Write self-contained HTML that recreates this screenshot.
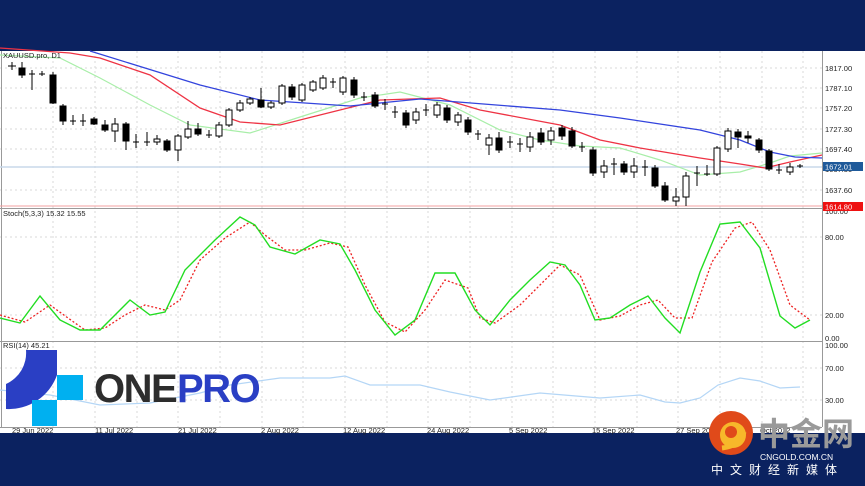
<!DOCTYPE html>
<html><head><meta charset="utf-8"><style>
html,body{margin:0;padding:0;width:865px;height:486px;overflow:hidden;background:#0b2260;font-family:"Liberation Sans",sans-serif}
svg{position:absolute;left:0;top:0}
</style></head><body>
<svg width="865" height="486" viewBox="0 0 865 486" xmlns="http://www.w3.org/2000/svg" font-family="Liberation Sans, sans-serif">
<rect x="0" y="0" width="865" height="51" fill="#0b2260"/>
<rect x="0" y="51" width="865" height="382" fill="#fff"/>
<rect x="0" y="433" width="865" height="53" fill="#0b2260"/>
<g stroke="#d8d8d8" stroke-dasharray="2,3" stroke-width="1">
<line x1="53" y1="51" x2="53" y2="427"/><line x1="95" y1="51" x2="95" y2="427"/><line x1="137" y1="51" x2="137" y2="427"/><line x1="178" y1="51" x2="178" y2="427"/><line x1="220" y1="51" x2="220" y2="427"/><line x1="262" y1="51" x2="262" y2="427"/><line x1="303" y1="51" x2="303" y2="427"/><line x1="345" y1="51" x2="345" y2="427"/><line x1="387" y1="51" x2="387" y2="427"/><line x1="428" y1="51" x2="428" y2="427"/><line x1="470" y1="51" x2="470" y2="427"/><line x1="512" y1="51" x2="512" y2="427"/><line x1="553" y1="51" x2="553" y2="427"/><line x1="595" y1="51" x2="595" y2="427"/><line x1="637" y1="51" x2="637" y2="427"/><line x1="678" y1="51" x2="678" y2="427"/><line x1="720" y1="51" x2="720" y2="427"/><line x1="762" y1="51" x2="762" y2="427"/><line x1="803" y1="51" x2="803" y2="427"/>
<line x1="0" y1="68" x2="822" y2="68"/><line x1="0" y1="88" x2="822" y2="88"/><line x1="0" y1="108" x2="822" y2="108"/><line x1="0" y1="129" x2="822" y2="129"/><line x1="0" y1="149" x2="822" y2="149"/><line x1="0" y1="190" x2="822" y2="190"/>
<line x1="0" y1="237" x2="822" y2="237"/><line x1="0" y1="315" x2="822" y2="315"/>
<line x1="0" y1="368" x2="822" y2="368"/><line x1="0" y1="400" x2="822" y2="400"/>
</g>
<g stroke="#999" fill="none" stroke-width="1">
<line x1="822.5" y1="51" x2="822.5" y2="427"/>
<line x1="0" y1="208.5" x2="822" y2="208.5"/>
<line x1="0" y1="341.5" x2="822" y2="341.5"/>
<line x1="0" y1="427.5" x2="822" y2="427.5"/>
<line x1="1.5" y1="51" x2="1.5" y2="427"/>
</g>
<line x1="0" y1="167" x2="822" y2="167" stroke="#c8d8ea" stroke-width="1.5"/>
<line x1="0" y1="206" x2="822" y2="206" stroke="#f3a0a0" stroke-width="1"/>
<polyline fill="none" stroke="#a8eea8" stroke-width="1.2" points="0,55 60,58 100,78 150,105 190,125 250,133 300,117 360,98 400,92 450,105 500,130 540,140 580,146 620,148 660,160 700,175 740,172 770,163 790,156 822,153"/>
<polyline fill="none" stroke="#ee3344" stroke-width="1.3" points="0,48 70,53 100,58 150,75 200,108 240,122 280,125 340,110 380,100 440,98 480,110 560,125 600,140 640,148 700,158 740,164 765,168 790,162 822,155"/>
<polyline fill="none" stroke="#3344dd" stroke-width="1.3" points="90,51 200,85 260,100 350,106 420,99 560,110 620,118 700,130 740,140 770,152 795,157 822,158"/>
<g stroke="#000" stroke-width="1">
<line x1="12" y1="62" x2="12" y2="70"/><line x1="8" y1="66" x2="16" y2="66"/>
<line x1="22" y1="62" x2="22" y2="78"/><rect x="19" y="68" width="6" height="7" fill="#000"/>
<line x1="32" y1="70" x2="32" y2="90"/><line x1="29" y1="74" x2="35" y2="74"/>
<line x1="42" y1="71" x2="42" y2="76"/><line x1="39" y1="74" x2="45" y2="74"/>
<line x1="53" y1="72" x2="53" y2="104"/><rect x="50" y="75" width="6" height="28" fill="#000"/>
<line x1="63" y1="104" x2="63" y2="125"/><rect x="60" y="106" width="6" height="15" fill="#000"/>
<line x1="73" y1="115" x2="73" y2="125"/><line x1="70" y1="121" x2="76" y2="121"/>
<line x1="83" y1="114" x2="83" y2="126"/><line x1="80" y1="121" x2="86" y2="121"/>
<line x1="94" y1="117" x2="94" y2="125"/><rect x="91" y="119" width="6" height="5" fill="#000"/>
<line x1="105" y1="120" x2="105" y2="132"/><rect x="102" y="125" width="6" height="5" fill="#000"/>
<line x1="115" y1="118" x2="115" y2="142"/><rect x="112" y="124" width="6" height="7" fill="#fff"/>
<line x1="126" y1="122" x2="126" y2="150"/><rect x="123" y="124" width="6" height="17" fill="#000"/>
<line x1="136" y1="134" x2="136" y2="148"/><line x1="133" y1="142" x2="139" y2="142"/>
<line x1="147" y1="132" x2="147" y2="146"/><line x1="144" y1="142" x2="150" y2="142"/>
<line x1="157" y1="135" x2="157" y2="145"/><rect x="154" y="139" width="6" height="3" fill="#fff"/>
<line x1="167" y1="139" x2="167" y2="152"/><rect x="164" y="141" width="6" height="9" fill="#000"/>
<line x1="178" y1="134" x2="178" y2="161"/><rect x="175" y="136" width="6" height="14" fill="#fff"/>
<line x1="188" y1="121" x2="188" y2="139"/><rect x="185" y="129" width="6" height="8" fill="#fff"/>
<line x1="198" y1="123" x2="198" y2="136"/><rect x="195" y="129" width="6" height="5" fill="#000"/>
<line x1="209" y1="130" x2="209" y2="138"/><line x1="206" y1="135" x2="212" y2="135"/>
<line x1="219" y1="122" x2="219" y2="138"/><rect x="216" y="125" width="6" height="11" fill="#fff"/>
<line x1="229" y1="108" x2="229" y2="127"/><rect x="226" y="110" width="6" height="15" fill="#fff"/>
<line x1="240" y1="100" x2="240" y2="112"/><rect x="237" y="103" width="6" height="7" fill="#fff"/>
<line x1="250" y1="97" x2="250" y2="105"/><rect x="247" y="99" width="6" height="4" fill="#fff"/>
<line x1="261" y1="88" x2="261" y2="108"/><rect x="258" y="100" width="6" height="7" fill="#000"/>
<line x1="271" y1="101" x2="271" y2="109"/><rect x="268" y="103" width="6" height="4" fill="#fff"/>
<line x1="282" y1="84" x2="282" y2="105"/><rect x="279" y="86" width="6" height="17" fill="#fff"/>
<line x1="292" y1="84" x2="292" y2="100"/><rect x="289" y="87" width="6" height="10" fill="#000"/>
<line x1="302" y1="83" x2="302" y2="102"/><rect x="299" y="85" width="6" height="15" fill="#fff"/>
<line x1="313" y1="80" x2="313" y2="92"/><rect x="310" y="82" width="6" height="8" fill="#fff"/>
<line x1="323" y1="75" x2="323" y2="90"/><rect x="320" y="78" width="6" height="10" fill="#fff"/>
<line x1="333" y1="78" x2="333" y2="88"/><line x1="330" y1="82" x2="336" y2="82"/>
<line x1="343" y1="76" x2="343" y2="95"/><rect x="340" y="78" width="6" height="14" fill="#fff"/>
<line x1="354" y1="77" x2="354" y2="98"/><rect x="351" y="80" width="6" height="15" fill="#000"/>
<line x1="364" y1="92" x2="364" y2="101"/><line x1="361" y1="97" x2="367" y2="97"/>
<line x1="375" y1="92" x2="375" y2="108"/><rect x="372" y="95" width="6" height="11" fill="#000"/>
<line x1="385" y1="99" x2="385" y2="110"/><line x1="382" y1="104" x2="388" y2="104"/>
<line x1="395" y1="106" x2="395" y2="118"/><line x1="392" y1="112" x2="398" y2="112"/>
<line x1="406" y1="110" x2="406" y2="128"/><rect x="403" y="113" width="6" height="12" fill="#000"/>
<line x1="416" y1="108" x2="416" y2="124"/><rect x="413" y="112" width="6" height="8" fill="#fff"/>
<line x1="426" y1="104" x2="426" y2="116"/><line x1="423" y1="110" x2="429" y2="110"/>
<line x1="437" y1="102" x2="437" y2="118"/><rect x="434" y="105" width="6" height="10" fill="#fff"/>
<line x1="447" y1="105" x2="447" y2="123"/><rect x="444" y="108" width="6" height="12" fill="#000"/>
<line x1="458" y1="112" x2="458" y2="126"/><rect x="455" y="115" width="6" height="7" fill="#fff"/>
<line x1="468" y1="117" x2="468" y2="135"/><rect x="465" y="120" width="6" height="12" fill="#000"/>
<line x1="478" y1="130" x2="478" y2="140"/><line x1="475" y1="134" x2="481" y2="134"/>
<line x1="489" y1="134" x2="489" y2="155"/><rect x="486" y="138" width="6" height="7" fill="#fff"/>
<line x1="499" y1="132" x2="499" y2="153"/><rect x="496" y="138" width="6" height="12" fill="#000"/>
<line x1="510" y1="136" x2="510" y2="148"/><line x1="507" y1="142" x2="513" y2="142"/>
<line x1="520" y1="138" x2="520" y2="152"/><line x1="517" y1="144" x2="523" y2="144"/>
<line x1="530" y1="132" x2="530" y2="152"/><rect x="527" y="137" width="6" height="10" fill="#fff"/>
<line x1="541" y1="128" x2="541" y2="145"/><rect x="538" y="133" width="6" height="9" fill="#000"/>
<line x1="551" y1="127" x2="551" y2="145"/><rect x="548" y="131" width="6" height="9" fill="#fff"/>
<line x1="562" y1="125" x2="562" y2="140"/><rect x="559" y="128" width="6" height="8" fill="#000"/>
<line x1="572" y1="127" x2="572" y2="148"/><rect x="569" y="131" width="6" height="15" fill="#000"/>
<line x1="582" y1="142" x2="582" y2="152"/><line x1="579" y1="147" x2="585" y2="147"/>
<line x1="593" y1="147" x2="593" y2="176"/><rect x="590" y="150" width="6" height="23" fill="#000"/>
<line x1="604" y1="160" x2="604" y2="178"/><rect x="601" y="166" width="6" height="6" fill="#fff"/>
<line x1="614" y1="158" x2="614" y2="175"/><line x1="611" y1="164" x2="617" y2="164"/>
<line x1="624" y1="161" x2="624" y2="175"/><rect x="621" y="164" width="6" height="8" fill="#000"/>
<line x1="634" y1="158" x2="634" y2="178"/><rect x="631" y="166" width="6" height="6" fill="#fff"/>
<line x1="645" y1="160" x2="645" y2="176"/><line x1="642" y1="167" x2="648" y2="167"/>
<line x1="655" y1="165" x2="655" y2="188"/><rect x="652" y="168" width="6" height="18" fill="#000"/>
<line x1="665" y1="182" x2="665" y2="202"/><rect x="662" y="186" width="6" height="14" fill="#000"/>
<line x1="676" y1="188" x2="676" y2="206"/><rect x="673" y="197" width="6" height="4" fill="#fff"/>
<line x1="686" y1="172" x2="686" y2="206"/><rect x="683" y="176" width="6" height="21" fill="#fff"/>
<line x1="697" y1="166" x2="697" y2="186"/><line x1="694" y1="173" x2="700" y2="173"/>
<line x1="707" y1="165" x2="707" y2="176"/><line x1="704" y1="174" x2="710" y2="174"/>
<line x1="717" y1="146" x2="717" y2="176"/><rect x="714" y="148" width="6" height="26" fill="#fff"/>
<line x1="728" y1="128" x2="728" y2="152"/><rect x="725" y="131" width="6" height="18" fill="#fff"/>
<line x1="738" y1="129" x2="738" y2="148"/><rect x="735" y="132" width="6" height="5" fill="#000"/>
<line x1="748" y1="131" x2="748" y2="143"/><rect x="745" y="136" width="6" height="2" fill="#000"/>
<line x1="759" y1="138" x2="759" y2="153"/><rect x="756" y="140" width="6" height="10" fill="#000"/>
<line x1="769" y1="149" x2="769" y2="171"/><rect x="766" y="151" width="6" height="18" fill="#000"/>
<line x1="779" y1="164" x2="779" y2="174"/><line x1="776" y1="170" x2="782" y2="170"/>
<line x1="790" y1="163" x2="790" y2="175"/><rect x="787" y="167" width="6" height="5" fill="#fff"/>
<line x1="800" y1="164" x2="800" y2="168"/><line x1="797" y1="166" x2="803" y2="166"/>
</g>
<polyline fill="none" stroke="#ee2222" stroke-width="1.3" stroke-dasharray="2,2" points="0,315 25,322 50,305 68,318 85,330 105,328 125,315 145,305 165,310 180,300 200,260 225,238 250,222 265,235 285,250 305,250 330,243 348,247 365,285 385,322 405,332 425,310 445,280 468,288 480,318 495,323 520,305 540,285 560,265 580,275 600,320 620,316 640,305 658,300 675,318 692,318 712,262 735,228 752,222 770,250 790,305 810,320"/>
<polyline fill="none" stroke="#22dd22" stroke-width="1.4" points="0,318 20,323 40,296 60,320 80,330 100,330 130,300 150,315 165,312 185,270 215,240 240,217 255,225 270,247 295,254 320,240 340,244 355,270 375,310 395,335 415,320 435,273 455,273 475,310 490,325 510,300 530,280 550,262 565,265 580,285 595,320 610,318 630,305 648,296 665,318 680,333 700,272 720,224 740,222 760,248 780,316 795,328 810,320"/>
<polyline fill="none" stroke="#b4d6f6" stroke-width="1.2" points="0,390 50,395 100,405 150,403 200,393 230,385 280,378 330,378 345,376 370,385 420,385 450,392 490,400 540,393 600,398 640,395 665,402 680,403 700,398 718,385 740,378 760,381 780,388 800,387"/>
<g font-size="7.5" fill="#222">
<text x="3" y="58">XAUUSD.pro, D1</text>
<text x="3" y="216">Stoch(5,3,3) 15.32 15.55</text>
<text x="3" y="348">RSI(14) 45.21</text>
<text x="825" y="71">1817.00</text><text x="825" y="91">1787.10</text><text x="825" y="111">1757.20</text><text x="825" y="132">1727.30</text><text x="825" y="152">1697.40</text><text x="825" y="172">1667.50</text><text x="825" y="193">1637.60</text>
<text x="825" y="214">100.00</text><text x="825" y="240">80.00</text><text x="825" y="318">20.00</text><text x="825" y="341">0.00</text>
<text x="825" y="348">100.00</text><text x="825" y="371">70.00</text><text x="825" y="403">30.00</text>
<text x="12" y="433">29 Jun 2022</text><text x="95" y="433">11 Jul 2022</text><text x="178" y="433">21 Jul 2022</text><text x="261" y="433">2 Aug 2022</text><text x="343" y="433">12 Aug 2022</text><text x="427" y="433">24 Aug 2022</text><text x="509" y="433">5 Sep 2022</text><text x="592" y="433">15 Sep 2022</text><text x="676" y="433">27 Sep 2022</text><text x="760" y="433">Oct 2022</text>
</g>
<rect x="823" y="162" width="40" height="9" fill="#1f5a9a"/><text x="825" y="169.5" font-size="7.5" fill="#fff">1672.01</text>
<rect x="823" y="202" width="40" height="9" fill="#ee1111"/><text x="825" y="209.5" font-size="7.5" fill="#fff">1614.80</text>
<path d="M6,409 L6,384 A34,34 0 0 0 26,350 L57,350 L57,375 A51,51 0 0 1 6,409 Z" fill="#2a3fc4"/>
<rect x="57" y="375" width="26" height="25" fill="#00b0f0"/>
<rect x="32" y="400" width="25" height="26" fill="#00b0f0"/>
<text x="94" y="402" font-size="40" font-weight="bold" fill="#2d2d2d" letter-spacing="-1.5">ONE</text>
<text x="177" y="402" font-size="40" font-weight="bold" fill="#2a3fc4" letter-spacing="-1.5">PRO</text>
<circle cx="731" cy="433" r="22" fill="#e04a1a"/>
<circle cx="733" cy="435" r="13" fill="#f7b82a"/>
<circle cx="731" cy="432" r="6" fill="#e04a1a"/>
<path d="M722,448 Q740,446 744,432" stroke="#f7b82a" stroke-width="5" fill="none"/>
<text x="758" y="445" font-size="32" font-weight="bold" fill="#9a9a9a" font-family="Liberation Sans, Noto Sans CJK SC, sans-serif">中金网</text>
<text x="760" y="460" font-size="8.5" fill="#fff">CNGOLD.COM.CN</text>
<text x="711" y="474" font-size="12" fill="#fff" letter-spacing="7" font-family="Liberation Sans, Noto Sans CJK SC, sans-serif">中文财经新媒体</text>
</svg>
</body></html>
